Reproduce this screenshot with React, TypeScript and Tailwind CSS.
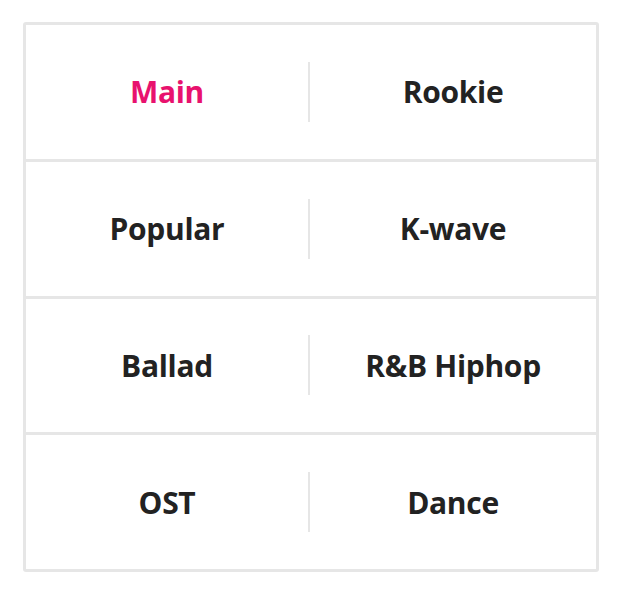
import React from "react";

const rows: [string, string][] = [
  ["Main", "Rookie"],
  ["Popular", "K-wave"],
  ["Ballad", "R&B Hiphop"],
  ["OST", "Dance"],
];

export default function App() {
  return (
    <div className="w-[620px] h-[591px] bg-white pt-[22px] pl-[23px]" style={{ fontFamily: '"Open Sans", "Noto Sans", sans-serif' }}>
      <div className="w-[576px] h-[550px] border-[3px] border-[#e6e6e6] rounded-[3px] flex flex-col">
        {rows.map(([a, b], i) => (
          <div
            key={i}
            className={`flex-1 flex items-center ${i < rows.length - 1 ? "border-b-[3px] border-[#e6e6e6]" : ""}`}
          >
            <div className={`w-[282px] text-center text-[30px] font-bold tracking-[-0.3px] ${i === 0 ? "text-[#e8126e]" : "text-[#222222]"}`}>
              {a}
            </div>
            <div className="w-[2px] h-[60px] bg-[#e6e6e6]" />
            <div className="flex-1 text-center text-[30px] font-bold tracking-[-0.3px] text-[#222222]">{b}</div>
          </div>
        ))}
      </div>
    </div>
  );
}
